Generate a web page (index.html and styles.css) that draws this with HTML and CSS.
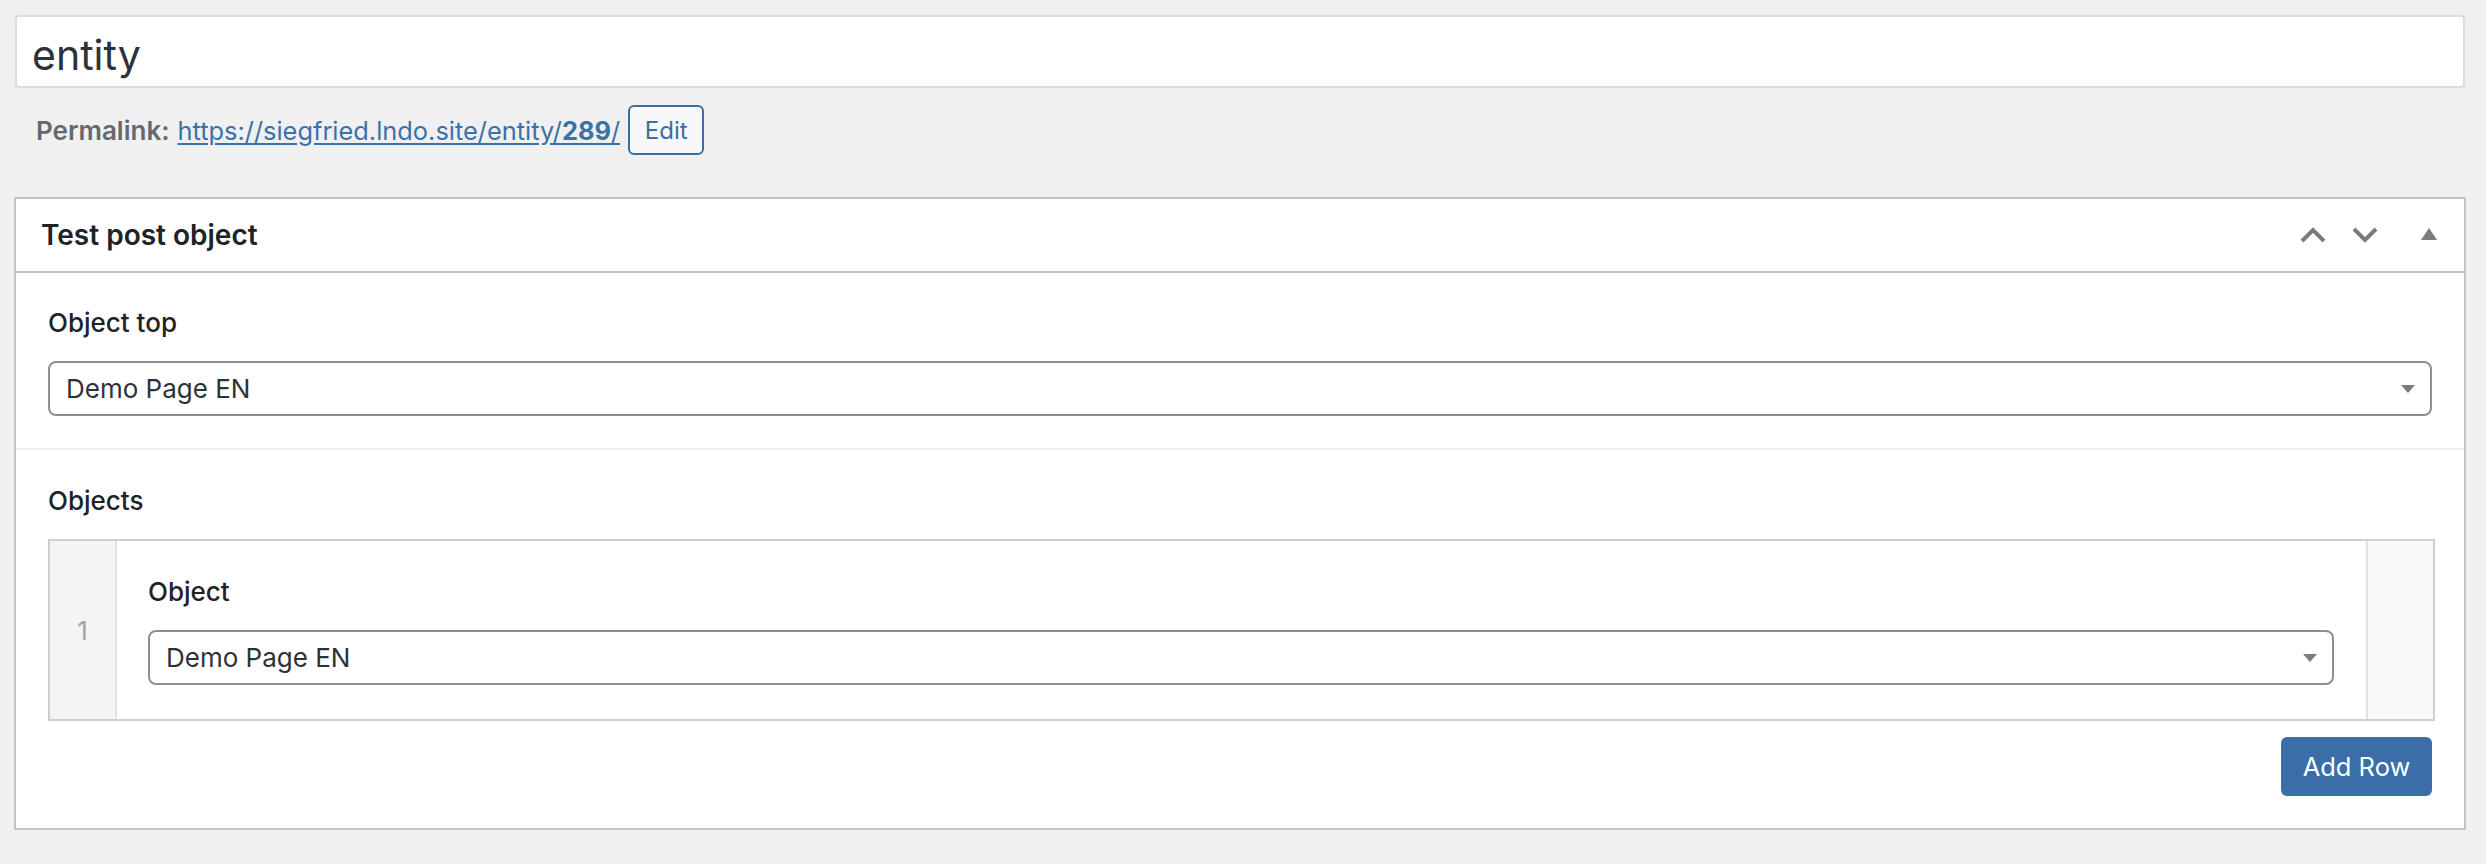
FILE: index.html
```html
<!DOCTYPE html>
<html lang="en">
<head>
    <meta charset="UTF-8">
    <title>Edit entity</title>
    <link rel="stylesheet" href="styles.css">
</head>
<body>
<div class="wrap">
    <div class="title-box">entity</div>

    <div class="permalink">
        <strong>Permalink:</strong>
        <a class="permalink-url" href="#">https://siegfried.lndo.site/entity/<b>289</b>/</a>
        <button class="btn-small">Edit</button>
    </div>

    <div class="postbox">
        <div class="postbox-header">
            <h2>Test post object</h2>
            <div class="handles">
                <svg class="chev" width="26" height="16" viewBox="0 0 26 16"><path d="M2 14 L13 3 L24 14" fill="none" stroke="#787c82" stroke-width="4"/></svg>
                <svg class="chev down" width="26" height="16" viewBox="0 0 26 16"><path d="M2 2 L13 13 L24 2" fill="none" stroke="#787c82" stroke-width="4"/></svg>
                <svg class="toggle" width="16" height="12" viewBox="0 0 16 12"><path d="M0 12 L8 0 L16 12 Z" fill="#787c82"/></svg>
            </div>
        </div>

        <div class="field">
            <label>Object top</label>
            <div class="select">
                <span>Demo Page EN</span>
                <svg width="14" height="8" viewBox="0 0 14 8"><path d="M0 0 L14 0 L7 8 Z" fill="#787c82"/></svg>
            </div>
        </div>

        <div class="field">
            <label>Objects</label>
            <div class="repeater">
                <div class="row-handle">1</div>
                <div class="row-fields">
                    <label>Object</label>
                    <div class="select">
                        <span>Demo Page EN</span>
                        <svg width="14" height="8" viewBox="0 0 14 8"><path d="M0 0 L14 0 L7 8 Z" fill="#787c82"/></svg>
                    </div>
                </div>
                <div class="row-remove"></div>
            </div>
            <div class="actions">
                <button class="btn-primary">Add Row</button>
            </div>
        </div>
    </div>
</div>
</body>
</html>
```

FILE: styles.css
```css
body {
    margin: 0;
    background: #f0f0f1;
    font-family: Inter, "Liberation Sans", sans-serif;
    color: #3c434a;
}
.wrap {
    padding: 15px 20px 0 14px;
}
.title-box {
    margin: 0 1px;
    height: 65px;
    box-sizing: content-box;
    background: #fff;
    border: 2px solid #dcdcde;
    border-radius: 4px;
    padding: 4px 15px 0;
    font-size: 41px;
    line-height: 69px;
    color: #2c3338;
    overflow: hidden;
}
.permalink {
    display: flex;
    align-items: center;
    height: 50px;
    margin-top: 17px;
    padding-left: 22px;
    font-size: 26px;
    color: #646970;
}
.permalink strong {
    font-weight: 600;
    margin-right: 8px;
}
.permalink-url {
    font-size: 25.4px;
    color: #3a72a8;
    text-decoration: underline;
    text-underline-offset: 3px;
}
.btn-small {
    margin-left: 8px;
    height: 50px;
    width: 76px;
    border: 2px solid #3a6ea5;
    border-radius: 6px;
    background: #f5f7f8;
    color: #3a6ea5;
    font-family: inherit;
    font-size: 24px;
    padding: 0;
}
.postbox {
    margin-top: 42px;
    background: #fff;
    border: 2px solid #c3c4c7;
}
.postbox-header {
    display: flex;
    align-items: center;
    height: 72px;
    border-bottom: 2px solid #c3c4c7;
    padding: 0 27px 0 25px;
}
.postbox-header h2 {
    flex: 1;
    margin: 0;
    font-size: 28px;
    font-weight: 600;
    color: #1d2327;
}
.handles {
    display: flex;
    align-items: center;
}
.chev.down {
    margin-left: 26px;
}
.toggle {
    margin-left: 43px;
    margin-top: -2px;
}
.field {
    padding: 32px;
}
.field + .field {
    border-top: 2px solid #eeeeee;
    padding-top: 33px;
}
label {
    display: block;
    font-size: 26px;
    line-height: 36px;
    font-weight: 500;
    color: #1d2327;
    margin-bottom: 20px;
}
.select {
    display: flex;
    align-items: center;
    justify-content: space-between;
    height: 51px;
    border: 2px solid #8c8f94;
    border-radius: 8px;
    padding: 0 15px 0 16px;
    font-size: 26px;
    color: #2c3338;
}
.repeater {
    display: flex;
    border: 2px solid #ccd0d4;
    margin-right: -3px;
}
.row-handle {
    width: 65px;
    background: #f4f4f4;
    border-right: 2px solid #e1e1e1;
    display: flex;
    align-items: center;
    justify-content: center;
    font-size: 26px;
    color: #a0a5aa;
}
.row-fields {
    flex: 1;
    padding: 33px 32px 34px 31px;
}
.row-remove {
    width: 65px;
    background: #f9f9f9;
    border-left: 2px solid #e1e1e1;
}
.actions {
    display: flex;
    justify-content: flex-end;
    margin-top: 16px;
}
.btn-primary {
    height: 59px;
    width: 151px;
    padding: 0;
    border: none;
    border-radius: 6px;
    background: #3b6ea9;
    color: #fff;
    font-family: inherit;
    font-size: 25.5px;
}
```
